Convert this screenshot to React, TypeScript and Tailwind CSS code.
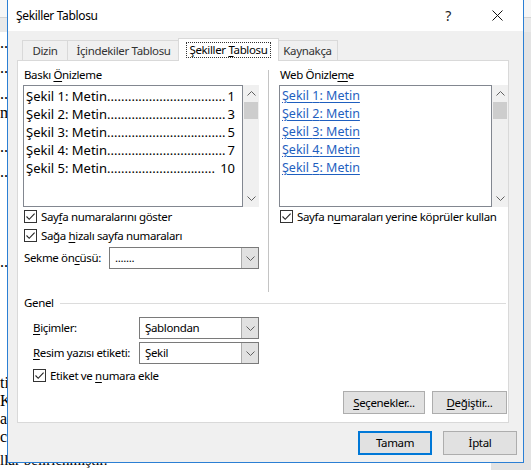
import React from "react";

const UI: React.CSSProperties = { fontFamily: '"Noto Sans", "Open Sans", sans-serif' };
const SERIF: React.CSSProperties = { fontFamily: '"Liberation Serif", "DejaVu Serif", serif' };

function U({ children }: { children: React.ReactNode }) {
  return <span className="underline decoration-1 underline-offset-[2px]">{children}</span>;
}

function Check() {
  return (
    <span className="w-[13px] h-[13px] border border-[#333333] bg-white flex items-center justify-center shrink-0">
      <svg width="11" height="11" viewBox="0 0 11 11">
        <path d="M1.5 5.5 L4.2 8.3 L9.6 2.6" fill="none" stroke="#222222" strokeWidth="1.1" />
      </svg>
    </span>
  );
}

function Chevron() {
  return (
    <svg width="9" height="5" viewBox="0 0 9 5">
      <path d="M0.5 0.5 L4.5 4.5 L8.5 0.5" fill="none" stroke="#606060" strokeWidth="1" />
    </svg>
  );
}

function ChevronUp() {
  return (
    <svg width="9" height="5" viewBox="0 0 9 5">
      <path d="M0.5 4.5 L4.5 0.5 L8.5 4.5" fill="none" stroke="#606060" strokeWidth="1" />
    </svg>
  );
}

function ScrollBar() {
  return (
    <div className="w-[16px] h-full bg-[#f0f0f0] flex flex-col shrink-0">
      <div className="h-[17px] flex items-center justify-center">
        <ChevronUp />
      </div>
      <div className="h-[17px] mx-[1px] bg-[#cdcdcd]" />
      <div className="flex-1" />
      <div className="h-[17px] flex items-center justify-center">
        <Chevron />
      </div>
    </div>
  );
}

function PrintRow({ n, dots, p }: { n: number; dots: string; p: string }) {
  return (
    <div className="h-[18px] flex items-center justify-between whitespace-nowrap">
      <span>
        Şekil {n}: Metin{dots}
      </span>
      <span>{p}</span>
    </div>
  );
}

function WebRow({ n }: { n: number }) {
  return (
    <div className="h-[18px] flex items-center whitespace-nowrap">
      <span className="text-[#1f5fbf] underline decoration-1 underline-offset-[2px]">Şekil {n}: Metin</span>
    </div>
  );
}

function Tab({ children, cls }: { children: React.ReactNode; cls: string }) {
  return (
    <div className={"h-[20px] bg-[#f0f0f0] border border-b-0 border-[#d9d9d9] flex items-center justify-center whitespace-nowrap text-[#333333] " + cls}>
      {children}
    </div>
  );
}

function Combo({ text, cls }: { text: string; cls: string }) {
  return (
    <div className={"h-[22px] border border-[#7a7a7a] bg-white flex shrink-0 " + cls}>
      <span className="flex-1 pl-[5px] leading-[20px] whitespace-nowrap">{text}</span>
      <div className="w-[17px] h-full bg-[#e1e1e1] border-l border-[#acacac] flex items-center justify-center">
        <Chevron />
      </div>
    </div>
  );
}

const D34 = "..................................";
const D31 = "...............................";

export default function App() {
  return (
    <div className="relative w-[531px] h-[470px] overflow-hidden bg-white">
      {/* Document behind the dialog */}
      <div className="w-full h-full flex flex-col">
        <div className="h-[18px] bg-[#f6f6f6] border-b border-[#d2d2d2] shrink-0" />
        <div className="h-[14px] bg-[#e9e9e9] shrink-0" />
        <div className="flex flex-1">
          <div className="w-[491px] bg-white text-[16px] text-black leading-[16px] flex flex-col" style={SERIF}>
            <div className="w-[7px] overflow-hidden flex flex-col whitespace-nowrap">
              <div className="h-[3px]" />
              <div className="h-[25px]">..</div>
              <div className="h-[26px]">..</div>
              <div className="h-[19px]">..</div>
              <div className="h-[34px]">m</div>
              <div className="h-[25px]">..</div>
              <div className="h-[90px]">..</div>
              <div className="h-[121px]">..</div>
              <div className="h-[18px]">ti</div>
              <div className="h-[18px]">K</div>
              <div className="h-[18px]">ar</div>
              <div className="h-[23px]">ca</div>
            </div>
            <div className="whitespace-nowrap text-[15px]">llar belirlenmiştir.</div>
          </div>
          <div className="flex-1 bg-[#e3e3e3]" />
        </div>
      </div>

      {/* Dialog */}
      <div
        className="absolute left-[7px] top-0 w-[517px] h-[463px] border-x border-b border-[#2b7fd4] bg-[#f0f0f0] flex flex-col text-[11.5px] text-black tracking-[-0.35px]"
        style={UI}
      >
        {/* Title bar */}
        <div className="h-[31px] bg-white flex items-center shrink-0">
          <span className="ml-[8px] text-[12px] whitespace-nowrap">Şekiller Tablosu</span>
          <span className="ml-auto mr-[41px] text-[14px] text-[#222222]">?</span>
          <svg width="11" height="11" viewBox="0 0 11 11" className="mr-[20px]">
            <path d="M0.5 0.5 L10.5 10.5 M10.5 0.5 L0.5 10.5" stroke="#111111" strokeWidth="1" />
          </svg>
        </div>

        {/* Tabs */}
        <div className="mt-[7px] ml-[14px] h-[22px] flex items-end shrink-0">
          <Tab cls="w-[46px]">Dizin</Tab>
          <Tab cls="w-[113px] -ml-px">İçindekiler Tablosu</Tab>
          <div className="relative z-10 -ml-[2px] -mb-px w-[101px] h-[23px] bg-white border border-b-0 border-[#d9d9d9] flex items-center justify-center">
            <div className="px-[2px] border border-dotted border-[#333333] h-[16px] leading-[14px] whitespace-nowrap">
              <span>
                Şekiller <U>T</U>ablosu
              </span>
            </div>
          </div>
          <Tab cls="w-[61px] -ml-[2px]">Kaynakça</Tab>
        </div>

        {/* Panel */}
        <div className="ml-[9px] w-[492px] h-[363px] bg-white border border-[#d9d9d9] flex flex-col shrink-0">
          <div className="flex pl-[5px] h-[231px]">
            {/* Left column */}
            <div className="w-[236px] flex flex-col">
              <div className="mt-[6px] h-[16px] leading-[16px] pl-[1px] whitespace-nowrap">
                Baskı <U>Ö</U>nizleme
              </div>
              <div className="mt-[2px] h-[122px] flex">
                <div className="w-[220px] h-full border border-[#828790] bg-white pl-[2px] pr-[7px] pt-[1px] text-[13px] leading-[18px] tracking-normal">
                  <PrintRow n={1} dots={D34} p="1" />
                  <PrintRow n={2} dots={D34} p="3" />
                  <PrintRow n={3} dots={D34} p="5" />
                  <PrintRow n={4} dots={D34} p="7" />
                  <PrintRow n={5} dots={D31} p="10" />
                </div>
                <ScrollBar />
              </div>
              <div className="h-[19px] flex items-center gap-[4px] pl-[1px] whitespace-nowrap">
                <Check />
                <span>
                  Say<U>f</U>a numaralarını göster
                </span>
              </div>
              <div className="h-[19px] flex items-center gap-[4px] pl-[1px] whitespace-nowrap">
                <Check />
                <span>
                  Sağa <U>h</U>izalı sayfa numaraları
                </span>
              </div>
              <div className="mt-[2px] h-[22px] flex items-center">
                <span className="w-[86px] pl-[1px] whitespace-nowrap shrink-0">
                  Sekme ön<U>c</U>üsü:
                </span>
                <Combo text="......." cls="w-[150px]" />
              </div>
            </div>

            {/* Separator */}
            <div className="ml-[9px] mt-[9px] w-px h-[222px] bg-[#c4c4c4]" />

            {/* Right column */}
            <div className="ml-[10px] w-[229px] flex flex-col">
              <div className="mt-[6px] h-[16px] leading-[16px] pl-[1px] whitespace-nowrap">
                Web Önizle<U>m</U>e
              </div>
              <div className="mt-[2px] h-[122px] flex">
                <div className="w-[213px] h-full border border-[#828790] bg-white px-[2px] pt-[1px] text-[12.5px] leading-[18px] tracking-normal">
                  <WebRow n={1} />
                  <WebRow n={2} />
                  <WebRow n={3} />
                  <WebRow n={4} />
                  <WebRow n={5} />
                </div>
                <ScrollBar />
              </div>
              <div className="h-[19px] flex items-center gap-[4px] pl-[1px] whitespace-nowrap">
                <Check />
                <span>
                  Sayfa n<U>u</U>maraları yerine köprüler kullan
                </span>
              </div>
            </div>
          </div>

          {/* Genel */}
          <div className="mt-[3px] h-[16px] flex items-center pl-[6px] pr-[2px]">
            <span className="leading-[16px]">Genel</span>
            <div className="flex-1 ml-[6px] h-px bg-[#dcdcdc]" />
          </div>

          <div className="mt-[6px] h-[22px] flex items-center pl-[15px]">
            <span className="w-[106px] whitespace-nowrap shrink-0">
              <U>B</U>içimler:
            </span>
            <Combo text="Şablondan" cls="w-[120px]" />
          </div>

          <div className="mt-[3px] h-[22px] flex items-center pl-[15px]">
            <span className="w-[106px] whitespace-nowrap shrink-0">
              <U>R</U>esim yazısı etiketi:
            </span>
            <Combo text="Şekil" cls="w-[120px]" />
          </div>

          <div className="mt-[2px] h-[19px] flex items-center gap-[4px] pl-[15px] whitespace-nowrap">
            <Check />
            <span>
              Etiket ve <U>n</U>umara ekle
            </span>
          </div>

          <div className="mt-[6px] h-[23px] flex justify-end gap-[7px] pr-[1px]">
            <div className="w-[82px] h-[23px] bg-[#e1e1e1] border border-[#adadad] flex items-center justify-center whitespace-nowrap">
              <span>
                <U>S</U>eçenekler...
              </span>
            </div>
            <div className="w-[75px] h-[23px] bg-[#e1e1e1] border border-[#adadad] flex items-center justify-center whitespace-nowrap">
              <span>
                <U>D</U>eğiştir...
              </span>
            </div>
          </div>
        </div>

        {/* Bottom buttons */}
        <div className="mt-[8px] h-[24px] flex justify-end gap-[11px] pr-[6px] shrink-0">
          <div className="w-[74px] h-[24px] bg-[#e1e1e1] border-2 border-[#0078d7] flex items-center justify-center">
            Tamam
          </div>
          <div className="w-[74px] h-[24px] bg-[#e1e1e1] border border-[#adadad] flex items-center justify-center">
            İptal
          </div>
        </div>
      </div>
    </div>
  );
}
